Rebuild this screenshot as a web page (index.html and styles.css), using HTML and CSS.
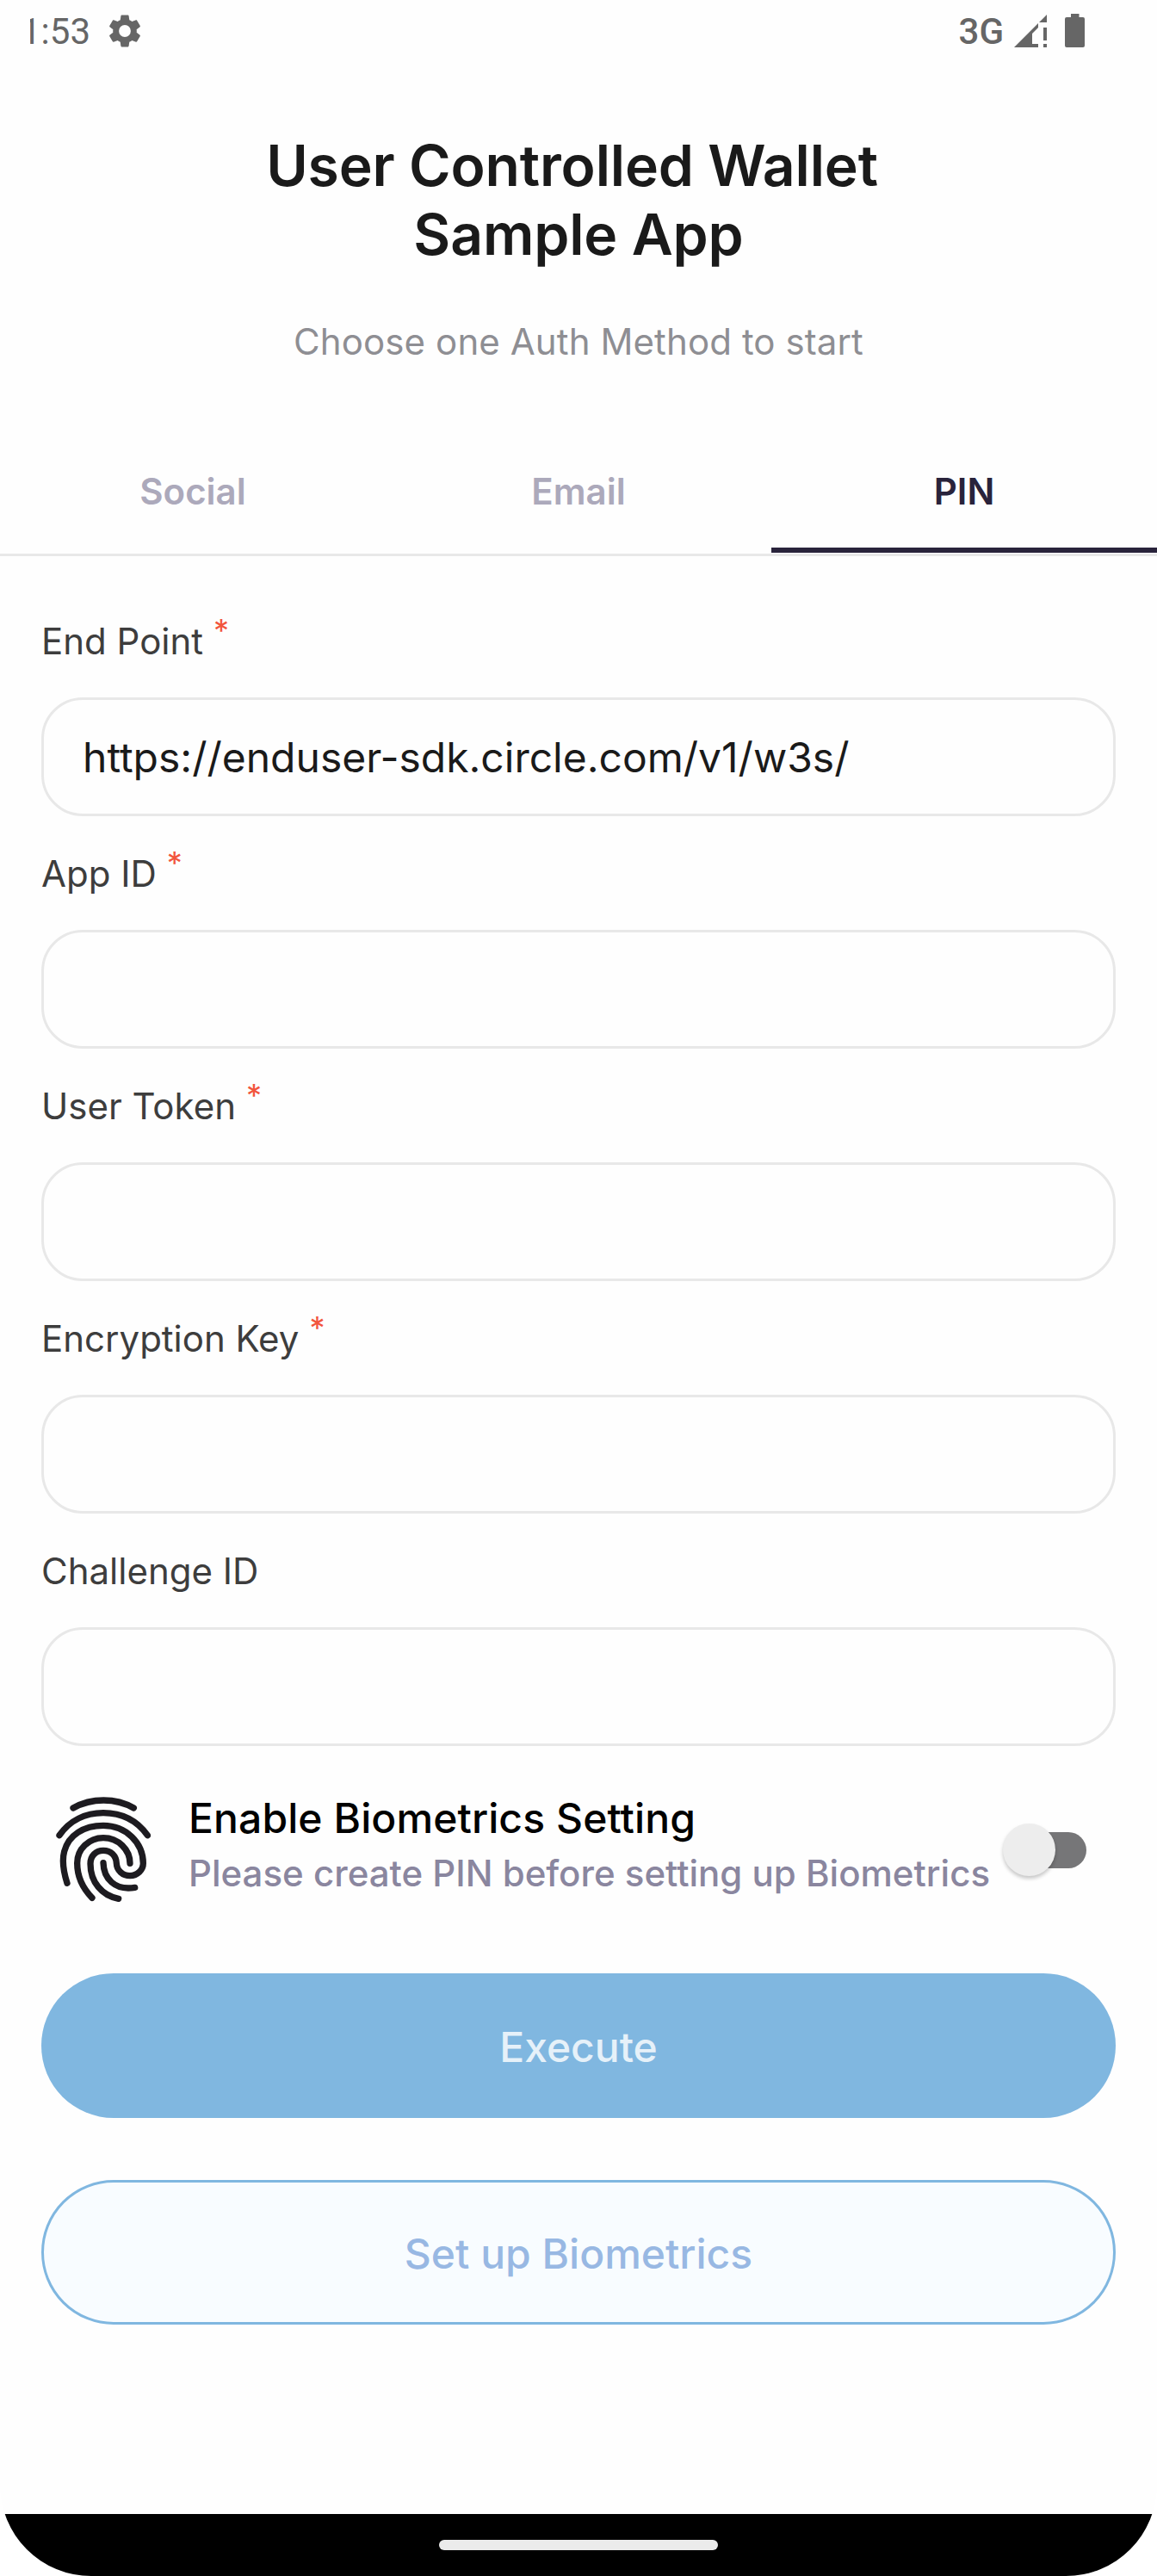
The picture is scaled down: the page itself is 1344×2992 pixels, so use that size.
FILE: index.html
```html
<!DOCTYPE html>
<html lang="en">
<head>
<meta charset="utf-8">
<title>User Controlled Wallet Sample App</title>
<link rel="stylesheet" href="styles.css">
</head>
<body>
<div class="screen">
  <header class="status-bar">
    <span class="clock">1:53</span>
    <svg class="gear" viewBox="0 0 24 24"><path d="M19.14 12.94c.04-.3.06-.61.06-.94 0-.32-.02-.64-.07-.94l2.03-1.58c.18-.14.23-.41.12-.61l-1.92-3.32c-.12-.22-.37-.29-.59-.22l-2.39.96c-.5-.38-1.03-.7-1.62-.94L14.4 2.81c-.04-.24-.24-.41-.48-.41h-3.84c-.24 0-.43.17-.47.41l-.36 2.54c-.59.24-1.13.57-1.62.94l-2.39-.96c-.22-.08-.47 0-.59.22L2.74 8.87c-.12.21-.08.47.12.61l2.03 1.58c-.05.3-.09.63-.09.94s.02.64.07.94l-2.03 1.58c-.18.14-.23.41-.12.61l1.92 3.32c.12.22.37.29.59.22l2.39-.96c.5.38 1.03.7 1.62.94l.36 2.54c.05.24.24.41.48.41h3.84c.24 0 .44-.17.47-.41l.36-2.54c.59-.24 1.13-.56 1.62-.94l2.39.96c.22.08.47 0 .59-.22l1.92-3.32c.12-.22.07-.47-.12-.61zM12 15.6A3.6 3.6 0 1 1 12 8.400a3.6 3.6 0 0 1 0 7.2z"/></svg>
    <span class="network">3G</span>
    <svg class="signal" viewBox="0 0 38 38"><path d="M38 0v9h-9zM28 10v5l-7 7v12h7v4H0zM34 15h4v15h-4zM34 34h4v4h-4z"/></svg>
    <svg class="battery" viewBox="0 0 23 39"><path d="M7 0h9.500v4H21a2 2 0 0 1 2 2v31a2 2 0 0 1-2 2H2a2 2 0 0 1-2-2V6a2 2 0 0 1 2-2h5z"/></svg>
  </header>

  <h1 class="title"><span class="title-line title-first">User Controlled Wallet</span><span class="title-line">Sample App</span></h1>
  <p class="subtitle">Choose one Auth Method to start</p>

  <nav class="tabs">
    <span class="tab">Social</span>
    <span class="tab">Email</span>
    <span class="tab tab-active">PIN</span>
  </nav>

  <main class="form">
    <label class="field"><span class="label">End Point<span class="required">*</span></span><input class="input" type="text" value="https://enduser-sdk.circle.com/v1/w3s/"></label>
    <label class="field"><span class="label">App ID<span class="required">*</span></span><input class="input" type="text"></label>
    <label class="field"><span class="label">User Token<span class="required">*</span></span><input class="input" type="text"></label>
    <label class="field"><span class="label">Encryption Key<span class="required">*</span></span><input class="input" type="text"></label>
    <label class="field"><span class="label">Challenge ID</span><input class="input" type="text"></label>

    <section class="biometrics">
      <svg class="fingerprint" viewBox="75 80 330 366">
        <path d="M135 119Q183 92 241 92T346 119M87 214C123 162 178 136 240 136S357 162 394 214M114 381C101 340 96 300 104 270C119 213 172 180 240 180C319 180 379 240 379 312A48 43 0 0 1 333 355C307 355 287 336 286 312C285 284 266 267 240 267C214 267 195 286 195 313C195 377 235 424 293 435M201 432C168 398 149 356 149 311C149 262 190 223 240 223C292 223 333 264 333 312M240 310C241 363 279 408 350 396"/>
      </svg>
      <div class="bio-text">
        <div class="bio-title">Enable Biometrics Setting</div>
        <div class="bio-note">Please create PIN before setting up Biometrics</div>
      </div>
      <div class="switch"><span class="thumb"></span></div>
    </section>

    <button class="button primary">Execute</button>
    <button class="button secondary">Set up Biometrics</button>
  </main>

  <footer class="gesture-bar"><span class="handle"></span></footer>
</div>
</body>
</html>
```
FILE: styles.css
```css
* { box-sizing: border-box; }
html { background: #fff; }
body { margin: 0; font-family: Inter, "Liberation Sans", sans-serif; font-optical-sizing: none; }
.screen { width: 1344px; height: 2992px; display: flex; flex-direction: column; background: #fefefe; border-radius: 0 0 106px 106px; overflow: hidden; }

.status-bar { height: 74px; flex: none; display: flex; align-items: center; padding: 0 84px 0 24px; color: #666; fill: #666; font: 42px/74px Roboto, sans-serif; }
.clock { width: 84px; clip-path: inset(0 0 0 11px); white-space: nowrap; }
.gear { width: 46px; height: 46px; margin-left: 14px; margin-top: -2px; }
.network { margin-left: auto; font-weight: 500; }
.signal { width: 38px; height: 38px; margin-left: 12px; margin-top: -2px; }
.battery { width: 23px; height: 39px; margin-left: 21px; margin-top: -3px; }

.title { margin: 78px 0 0; display: flex; flex-direction: column; font-size: 66px; font-weight: 600; line-height: 80px; letter-spacing: -.15px; text-align: center; color: #1a1a1a; }
.title-first { padding-right: 15px; }
.subtitle { margin: 59px 0 0; height: 51px; font-size: 42px; line-height: 51px; letter-spacing: .1px; text-align: center; color: #8e8e93; }

.tabs { height: 148px; margin-top: 76px; flex: none; display: grid; grid-template-columns: repeat(3, 448px); border-bottom: 3px solid #e8e8e8; }
.tab { height: 144px; padding-top: 47px; font-size: 42px; font-weight: 600; line-height: 51px; text-align: center; color: #aca9bb; }
.tab-active { color: #29233b; border-bottom: 6px solid #29233b; }

.form { padding: 73px 48px 0; display: flex; flex-direction: column; }
.field { height: 270px; display: flex; flex-direction: column; justify-content: space-between; padding-bottom: 41px; }
.label { height: 51px; font-size: 42px; line-height: 51px; color: #3d3d3d; white-space: nowrap; }
.required { position: relative; top: -15px; margin-left: 12px; font-size: 36px; line-height: 1; color: #f2553d; }
.input { width: 1248px; height: 138px; margin: 0; padding: 1px 45px 0; border: 3px solid #e8e8e8; border-radius: 48px; background: transparent; font: 48px/60px Inter, sans-serif; color: #1a1a1a; outline: none; }

.biometrics { height: 162px; display: flex; margin-top: 8px; }
.fingerprint { width: 110px; height: 122px; margin: 10px 0 0 17px; fill: none; stroke: #1d1b20; stroke-width: 22; stroke-linecap: round; }
.bio-text { width: 936px; margin: 6px 0 0 44px; white-space: nowrap; font-weight: 500; }
.bio-title { font-size: 48px; line-height: 58px; letter-spacing: .1px; color: #000; }
.bio-note { margin-top: 9px; font-size: 42px; line-height: 51px; color: #8a869f; }
.switch { width: 80px; height: 42px; margin: 51px 0 0 27px; border-radius: 21px; background: #767678; }
.thumb { display: block; width: 61px; height: 61px; margin: -10px 0 0 -17px; border-radius: 50%; background: #ededed; box-shadow: 0 3px 4px rgba(0,0,0,.22); }

.button { width: 1248px; height: 168px; margin: 0; padding: 4px 0 0; border: 0; border-radius: 84px; font: 500 48px/58px Inter, sans-serif; }
.primary { margin-top: 53px; background: #80b7e0; color: #e6f1f9; }
.secondary { margin-top: 72px; background: #f8fcff; border: 3px solid #80b7e0; color: #98b8e3; }

.gesture-bar { height: 72px; flex: none; margin-top: auto; padding-top: 30px; background: #000; }
.handle { display: block; width: 324px; height: 12px; margin: 0 auto; border-radius: 6px; background: #ebebeb; }
```
